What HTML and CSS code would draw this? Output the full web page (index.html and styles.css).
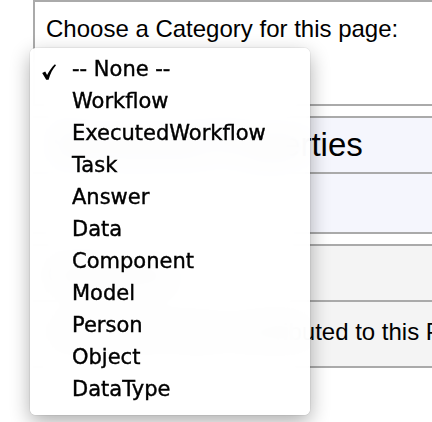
FILE: index.html
```html
<!DOCTYPE html>
<html>
<head>
<meta charset="utf-8">
<link rel="stylesheet" href="styles.css">
</head>
<body>
<div class="page">
  <div class="panel">
    <div class="prompt">Choose a Category for this page:</div>
  </div>
  <div class="table props">
    <div class="row head"><span class="title">Structured Properties</span></div>
    <div class="row tall"></div>
  </div>
  <div class="table grey">
    <div class="row cats"><span class="cattitle">Categories</span></div>
    <div class="row users"><span class="usertext">Users who have contributed to this Page</span></div>
  </div>
</div>
<div class="menu">
  <svg class="check" viewBox="0 0 14 16" width="14" height="16"><path d="M0.2 9.0 L3.2 7.4 L5.1 10.9 C7.2 6.8 9.8 3.1 12.9 0.2 L14 1.3 C10.8 4.8 8.2 9.8 6.6 15.8 L4.2 15.8 Z" fill="#000"/></svg>
  <div class="item">-- None --</div>
  <div class="item">Workflow</div>
  <div class="item">ExecutedWorkflow</div>
  <div class="item">Task</div>
  <div class="item">Answer</div>
  <div class="item">Data</div>
  <div class="item">Component</div>
  <div class="item">Model</div>
  <div class="item">Person</div>
  <div class="item">Object</div>
  <div class="item">DataType</div>
</div>
</body>
</html>
```
FILE: styles.css
```css
html, body {
  margin: 0;
  padding: 0;
  background: #fff;
}
body {
  width: 432px;
  height: 422px;
  overflow: hidden;
  position: relative;
  font-family: "Liberation Sans", Arial, sans-serif;
  color: #000;
}
.page {
  padding-left: 33px;
  width: 399px;
  overflow: hidden;
}
.panel {
  border-top: 2px solid #aaa;
  border-left: 2px solid #aaa;
  border-bottom: 2px solid #aaa;
  height: 102px;
  padding-left: 11px;
  box-sizing: content-box;
}
.prompt {
  padding-top: 13px;
  font-size: 24px;
  line-height: 28px;
  white-space: nowrap;
}
.table {
  margin-top: 10px;
  border-top: 2px solid #aaa;
  border-bottom: 2px solid #aaa;
}
.props { background: #f5f6fd; }
.grey { background: #f4f4f4; }
.row {
  box-sizing: border-box;
  padding-left: 18px;
  white-space: nowrap;
  overflow: hidden;
}
.row + .row {
  border-top: 2px solid #aaa;
}
.head {
  height: 54px;
  padding-top: 8px;
  font-size: 33px;
  line-height: 38px;
}
.tall {
  height: 60px;
}
.cats {
  height: 54px;
  padding-top: 13px;
  font-size: 26px;
  line-height: 30px;
  padding-left: 14px;
}
.users {
  height: 66px;
  padding-top: 16px;
  font-size: 24px;
  line-height: 28px;
}
.menu {
  position: absolute;
  left: 30px;
  top: 48px;
  width: 280px;
  height: 367px;
  box-sizing: border-box;
  padding: 5px 0 9px 42px;
  background: rgba(255, 255, 255, 0.96);
  -webkit-backdrop-filter: blur(14px);
  backdrop-filter: blur(14px);
  border-radius: 6px;
  box-shadow: 0 0 0 1px rgba(0, 0, 0, 0.05), 0 7px 20px rgba(0, 0, 0, 0.32);
  font-family: "DejaVu Sans", Verdana, sans-serif;
  font-size: 21px;
  line-height: 32px;
  color: #000;
}
.item {
  height: 32px;
  white-space: nowrap;
  -webkit-text-stroke: 0.4px #000;
}
.check {
  position: absolute;
  left: 12px;
  top: 16px;
}
```
